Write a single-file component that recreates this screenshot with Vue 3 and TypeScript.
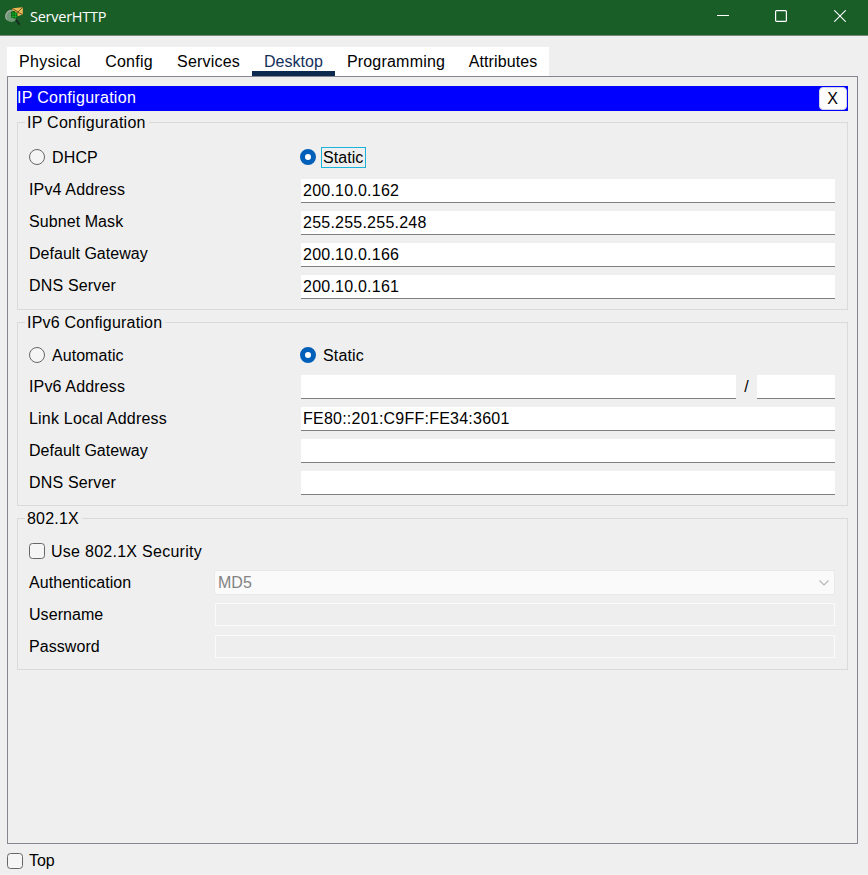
<script setup lang="ts">
import { ref } from 'vue'

interface Tab { name: string; width: number; spacing: number }
interface Field { label: string; value: string; spacing: number }

const tabs: Tab[] = [
  { name: 'Physical', width: 86, spacing: 0.3 },
  { name: 'Config', width: 72, spacing: 0.25 },
  { name: 'Services', width: 87, spacing: 0.2 },
  { name: 'Desktop', width: 83, spacing: 0.05 },
  { name: 'Programming', width: 122, spacing: 0.2 },
  { name: 'Attributes', width: 92, spacing: 0.1 },
]
const active = ref('Desktop')

const ipv4: Field[] = [
  { label: 'IPv4 Address', value: '200.10.0.162', spacing: 0.15 },
  { label: 'Subnet Mask', value: '255.255.255.248', spacing: 0.08 },
  { label: 'Default Gateway', value: '200.10.0.166', spacing: 0.03 },
  { label: 'DNS Server', value: '200.10.0.161', spacing: 0.17 },
]
const ipv6: Field[] = [
  { label: 'Link Local Address', value: 'FE80::201:C9FF:FE34:3601', spacing: 0.2 },
  { label: 'Default Gateway', value: '', spacing: 0.03 },
  { label: 'DNS Server', value: '', spacing: 0.17 },
]
</script>

<template>
  <div class="window">
    <header class="titlebar">
      <svg class="logo" width="20" height="20" viewBox="0 0 20 20">
        <circle cx="6.4" cy="10" r="6" fill="#6f9a77" />
        <path d="M1.8 13.6A6 6 0 0 1 6.4 4.4" fill="none" stroke="#a5a9a0" stroke-width="1.3" />
        <path d="M7 2.2 17.8 1.2 17.8 8.6 12.5 10.2 8 7Z" fill="#e9b857" />
        <path d="M7 2.2 13 6 17.8 1.2M12 6 17.8 8.6" fill="none" stroke="#66471c" stroke-width="0.9" />
        <path d="M6 6 9 4.8 12.5 7.2V13L9.5 12.5 6 11.5Z" fill="#0b5c14" />
        <path d="M6.5 8h5.5M6.5 10.5h5.5M8 6v6M10.5 6v6.5" stroke="#15b42a" stroke-width="0.8" />
        <path d="M10.8 13.5 14.7 18.6" stroke="#182b20" stroke-width="2" />
      </svg>
      <span class="title">ServerHTTP</span>
      <div class="controls">
        <svg width="12" height="12" viewBox="0 0 12 12"><path d="M0 5.5h12" stroke="#fff" /></svg>
        <svg width="12" height="12" viewBox="0 0 12 12"><rect x=".6" y=".6" width="10.8" height="10.8" rx="1" fill="none" stroke="#fff" stroke-width="1.2" /></svg>
        <svg width="12" height="12" viewBox="0 0 12 12"><path d="M.3 .3 11.7 11.7M11.7 .3 .3 11.7" stroke="#fff" stroke-width="1.1" /></svg>
      </div>
    </header>

    <nav class="tabs">
      <button
        v-for="t in tabs"
        :key="t.name"
        class="tab"
        :class="{ active: t.name === active }"
        :style="{ width: t.width + 'px', letterSpacing: t.spacing + 'px' }"
        @click="active = t.name"
      >{{ t.name }}</button>
    </nav>

    <main class="pane">
      <div class="banner">
        <span>IP Configuration</span>
        <button class="close">X</button>
      </div>

      <section class="group g4">
        <h2 class="legend">IP Configuration</h2>
        <div class="row choice">
          <label class="option"><i class="radio"></i><span>DHCP</span></label>
          <label class="option"><i class="radio on"></i><span class="focused">Static</span></label>
        </div>
        <div v-for="f in ipv4" :key="f.label" class="row">
          <span class="label" :style="{ letterSpacing: f.spacing + 'px' }">{{ f.label }}</span>
          <div class="input">{{ f.value }}</div>
        </div>
      </section>

      <section class="group g6">
        <h2 class="legend">IPv6 Configuration</h2>
        <div class="row choice">
          <label class="option"><i class="radio"></i><span class="automatic">Automatic</span></label>
          <label class="option"><i class="radio on"></i><span>Static</span></label>
        </div>
        <div class="row">
          <span class="label">IPv6 Address</span>
          <div class="prefix">
            <div class="input"></div>
            <span class="slash">/</span>
            <div class="input"></div>
          </div>
        </div>
        <div v-for="f in ipv6" :key="f.label" class="row">
          <span class="label" :style="{ letterSpacing: f.spacing + 'px' }">{{ f.label }}</span>
          <div class="input">{{ f.value }}</div>
        </div>
      </section>

      <section class="group g8">
        <h2 class="legend">802.1X</h2>
        <div class="row choice">
          <label class="option check"><i class="box"></i><span>Use 802.1X Security</span></label>
        </div>
        <div class="row">
          <span class="label">Authentication</span>
          <div class="select">
            <span>MD5</span>
            <svg width="10" height="6" viewBox="0 0 10 6"><path d="M.5 .5 5 5 9.5 .5" fill="none" stroke="#b4b4b4" stroke-width="1.1" /></svg>
          </div>
        </div>
        <div class="row"><span class="label">Username</span><div class="input disabled"></div></div>
        <div class="row"><span class="label">Password</span><div class="input disabled"></div></div>
      </section>
    </main>

    <footer class="footer">
      <label class="option top"><i class="box"></i><span>Top</span></label>
    </footer>
  </div>
</template>

<style>
body {
  margin: 0;
  background: #efefef;
}
</style>

<style scoped>
* {
  box-sizing: border-box;
}
.window {
  width: 868px;
  height: 875px;
  display: flex;
  flex-direction: column;
  background: #efefef;
  color: #000;
  font: 16px/20px "Liberation Sans", Arial, sans-serif;
  letter-spacing: 0.15px;
  white-space: nowrap;
  overflow: hidden;
}
.titlebar {
  height: 36px;
  flex: none;
  display: flex;
  align-items: flex-start;
  padding: 6px 22px 0 5px;
  background: #195d27;
  border-bottom: 1px solid #75877a;
}
.title {
  margin-left: 5px;
  color: #fff;
  font: 14.5px/21px "Open Sans", "Noto Sans", sans-serif;
  letter-spacing: -0.25px;
}
.controls {
  display: flex;
  gap: 46.5px;
  margin: 4px 0 0 auto;
}
.controls svg:nth-child(2) {
  margin: 0 0.5px 0 -0.5px;
}
.tabs {
  display: flex;
  flex: none;
  margin: 11px 0 0 7px;
}
.tab {
  height: 29px;
  padding: 3px 0 0;
  border: 0;
  border-bottom: 5px solid #fff;
  background: #fff;
  color: #000;
  font: 16px/24px "Liberation Sans", Arial, sans-serif;
}
.tab.active {
  border-bottom-color: #0c2a4e;
  color: #14305a;
}
.pane {
  width: 851px;
  height: 768px;
  flex: none;
  margin-left: 7px;
  padding: 9px;
  border: 1px solid #84878f;
}
.banner {
  height: 25px;
  display: flex;
  align-items: center;
  justify-content: space-between;
  padding-right: 1px;
  margin-bottom: 11px;
  background: #00f;
  color: #fff;
}
.banner span {
  margin-top: -2px;
  letter-spacing: 0.29px;
}
.close {
  width: 28px;
  height: 23px;
  padding: 0 1px 0 0;
  border: 1px solid #d2d2e6;
  border-radius: 4px;
  background: #fdfdfd;
  color: #000;
  font: 16px/21px "Liberation Sans", Arial, sans-serif;
}
.group {
  display: flex;
  flex-direction: column;
  gap: 8px;
  margin-bottom: 12px;
  padding: 0 12px 0 11px;
  border: 1px solid #dadada;
}
.g4 { height: 188px; }
.g6 { height: 184px; }
.g8 { height: 152px; }
.legend {
  align-self: flex-start;
  flex: none;
  margin: -11px 0 0 -4px;
  padding: 1px 3px 0 2px;
  background: #efefef;
  font-size: 16px;
  font-weight: 400;
  line-height: 20px;
  height: 20px;
  letter-spacing: 0.27px;
}
.g6 .legend,
.g8 .legend {
  letter-spacing: 0.2px;
}
.row {
  display: grid;
  flex: none;
  grid-template-columns: 272px 1fr;
  height: 24px;
}
.g8 .row {
  grid-template-columns: 186px 1fr;
}
.g4 .choice { height: 22px; margin: 6px 0 3px; }
.g6 .choice { height: 22px; margin: 4px 0 1px; }
.g8 .choice { height: 22px; margin: 4px 0 1px; }
.label {
  line-height: 21px;
}
.g6 .label,
.g8 .label {
  line-height: 23px;
}
.g8 .label {
  letter-spacing: 0.06px;
}
.option {
  display: flex;
  align-items: center;
  gap: 7px;
}
.option span {
  padding-top: 2px;
}
.option .automatic {
  letter-spacing: 0.05px;
}
.row .option + .option {
  margin-left: -1px;
}
.row .check {
  gap: 6px;
  letter-spacing: 0.27px;
}
.radio,
.box {
  width: 16px;
  height: 16px;
  flex: none;
  border: 1px solid #666;
  background: #f5f5f5;
}
.radio {
  border-radius: 50%;
}
.radio.on {
  border: 5px solid #005fb8;
  background: #fff;
}
.box {
  border-radius: 3.5px;
}
.option .focused {
  width: 45px;
  height: 21px;
  margin: 1px 0 0 -2px;
  padding: 0 0 0 1px;
  border: 1px solid #1bb3d9;
  line-height: 19px;
  letter-spacing: 0.05px;
}
.input {
  height: 24px;
  padding-left: 2px;
  border-bottom: 1px solid #808080;
  background: #fff;
  line-height: 23px;
  letter-spacing: 0.23px;
}
.input.disabled {
  height: 23px;
  border: 1px solid #fafafa;
  background: #eee;
}
.prefix {
  display: grid;
  grid-template-columns: 435px 21px 78px;
}
.slash {
  text-align: center;
  line-height: 23px;
}
.select {
  display: flex;
  align-items: center;
  justify-content: space-between;
  height: 25px;
  margin: -1px 0 0 -1px;
  padding: 0 5px 0 3px;
  border: 1px solid #e9e9e9;
  border-radius: 2px;
  background: #fafafa;
  color: #838383;
}
.select span {
  letter-spacing: 0;
}
.footer {
  padding: 7px 0 0 7px;
}
.footer .top {
  height: 20px;
  gap: 6px;
  letter-spacing: -0.1px;
}
.footer .top span {
  padding-top: 0;
}
</style>
